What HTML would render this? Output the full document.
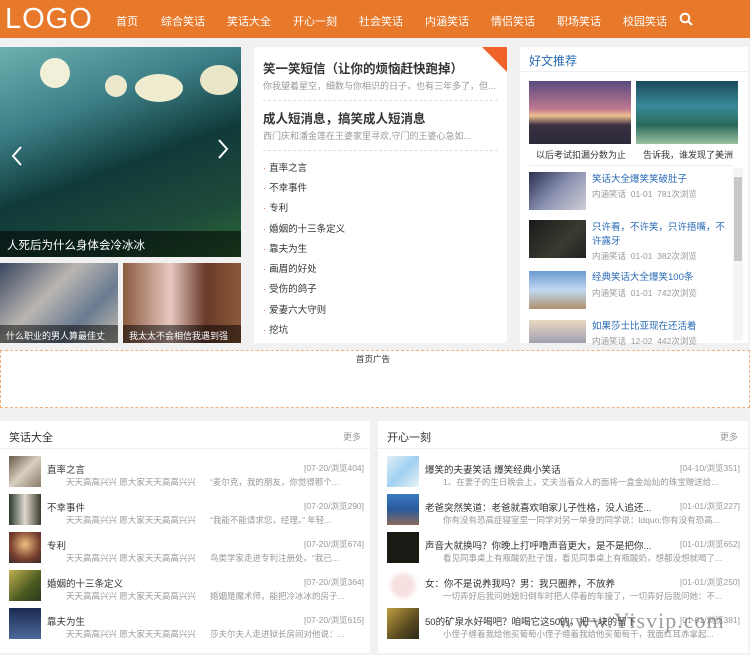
<!DOCTYPE html>
<html><head><meta charset="utf-8"><style>
*{margin:0;padding:0;box-sizing:border-box}
body{width:750px;height:655px;background:#f1f1f1;font-family:"Liberation Sans","Noto Sans CJK SC",sans-serif;position:relative;overflow:hidden;font-size:10px;color:#333}
.a{position:absolute}
.hd{left:0;top:0;width:750px;height:38px;background:#e8792b}
.logo{left:5px;top:3px;color:#fff;font-size:29px;letter-spacing:1px;font-weight:normal}
.nav span{position:absolute;top:13px;color:#fff;font-size:11px}
.w{background:#fff}
.mt{font-size:12.5px;font-weight:bold;color:#333}
.ms{font-size:9px;color:#999}
.li{left:263px;font-size:9.5px;color:#333}
.li:before{content:"·";color:#e8792b;margin-right:3px}
.rt{left:592px;font-size:9.5px;color:#2a6bb5;width:140px;line-height:14px}
.rm{left:592px;font-size:8.5px;color:#999}
.th{left:529px;width:57px;height:38px}
.bt{font-size:9.5px;color:#333}
.bd{font-size:8.5px;color:#999}
.bx{font-size:8.5px;color:#999}
</style></head><body>
<div class="a hd"></div>
<div class="a logo">LOGO</div>
<div class="nav">
<span style="left:116px">首页</span><span style="left:161px">综合笑话</span><span style="left:227px">笑话大全</span><span style="left:293px">开心一刻</span><span style="left:359px">社会笑话</span><span style="left:425px">内涵笑话</span><span style="left:491px">情侣笑话</span><span style="left:557px">职场笑话</span><span style="left:623px">校园笑话</span>
</div>
<svg class="a" style="left:679px;top:12px" width="14" height="14" viewBox="0 0 14 14"><circle cx="6" cy="6" r="4.3" fill="none" stroke="#fff" stroke-width="2"/><path d="M9 9l4 4" stroke="#fff" stroke-width="2.2"/></svg>

<!-- slider -->
<div class="a" style="left:0;top:47px;width:241px;height:210px;background:linear-gradient(160deg,#6fb0b0 0%,#3c7f86 30%,#103a3a 55%,#1d4a3a 80%,#2f6a34 100%)"></div>
<div class="a" style="left:40px;top:58px;width:30px;height:30px;border-radius:50%;background:#f2f0d8"></div>
<div class="a" style="left:105px;top:75px;width:22px;height:22px;border-radius:50%;background:#ece8cc"></div>
<div class="a" style="left:135px;top:74px;width:48px;height:28px;border-radius:50%;background:#efecd0"></div>
<div class="a" style="left:200px;top:65px;width:38px;height:30px;border-radius:50%;background:#eae6c8"></div>
<div class="a" style="left:0;top:231px;width:241px;height:26px;background:rgba(0,0,0,.55)"></div>
<div class="a" style="left:7px;top:237px;color:#fff;font-size:11.5px">人死后为什么身体会冷冰冰</div>
<svg class="a" style="left:10px;top:145px" width="14" height="22"><path d="M11 2L3 11l8 9" fill="none" stroke="#fff" stroke-width="2"/></svg>
<svg class="a" style="left:216px;top:138px" width="14" height="22"><path d="M3 2l8 9-8 9" fill="none" stroke="#fff" stroke-width="2"/></svg>
<div class="a" style="left:0;top:263px;width:118px;height:80px;background:linear-gradient(135deg,#3a4560,#b9b6b0 40%,#6a7a90 70%,#c9c2b0)"></div>
<div class="a" style="left:123px;top:263px;width:118px;height:80px;background:linear-gradient(90deg,#8a5a40,#e8c8c0 40%,#6a3a2a 70%,#8a5a3a)"></div>
<div class="a" style="left:0;top:325px;width:118px;height:18px;background:rgba(0,0,0,.5)"></div>
<div class="a" style="left:123px;top:325px;width:118px;height:18px;background:rgba(0,0,0,.5)"></div>
<div class="a" style="left:6px;top:329px;color:#fff;font-size:9px">什么职业的男人算最佳丈</div>
<div class="a" style="left:129px;top:329px;color:#fff;font-size:9px">我太太不会相信我遇到强</div>

<!-- middle -->
<div class="a w" style="left:254px;top:47px;width:253px;height:296px"></div>
<svg class="a" style="left:482px;top:47px" width="25" height="25"><path d="M0 0H25V25Z" fill="#f0622a"/></svg>
<div class="a mt" style="left:263px;top:58px">笑一笑短信（让你的烦恼赶快跑掉）</div>
<div class="a ms" style="left:263px;top:79px">你我望着星空，细数与你相识的日子，也有三年多了，但...</div>
<div class="a" style="left:263px;top:100px;width:235px;border-top:1px dashed #ddd"></div>
<div class="a mt" style="left:263px;top:108px">成人短消息，搞笑成人短消息</div>
<div class="a ms" style="left:263px;top:129px">西门庆和潘金莲在王婆家里寻欢,守门的王婆心急如...</div>
<div class="a" style="left:263px;top:150px;width:235px;border-top:1px dashed #ddd"></div>
<div class="a li" style="top:160px">直率之言</div>
<div class="a li" style="top:180px">不幸事件</div>
<div class="a li" style="top:200px">专利</div>
<div class="a li" style="top:221px">婚姻的十三条定义</div>
<div class="a li" style="top:241px">靠夫为生</div>
<div class="a li" style="top:261px">画眉的好处</div>
<div class="a li" style="top:281px">受伤的鸽子</div>
<div class="a li" style="top:302px">爱妻六大守则</div>
<div class="a li" style="top:322px">挖坑</div>

<!-- right -->
<div class="a w" style="left:520px;top:47px;width:228px;height:296px"></div>
<div class="a" style="left:529px;top:52px;font-size:12px;color:#2a6bb5">好文推荐</div>
<div class="a" style="left:520px;top:71px;width:228px;border-top:1px solid #eee"></div>
<div class="a" style="left:529px;top:81px;width:102px;height:63px;background:linear-gradient(180deg,#5a4a80,#c07a90 45%,#f0c090 55%,#3a3040 70%,#2a2a3a)"></div>
<div class="a" style="left:636px;top:81px;width:102px;height:63px;background:linear-gradient(180deg,#1a4a5a,#3a8a9a 40%,#2a6a5a 70%,#9ac0a0)"></div>
<div class="a" style="left:536px;top:148px;font-size:9px;color:#333">以后考试扣漏分数为止</div>
<div class="a" style="left:643px;top:148px;font-size:9px;color:#333">告诉我，谁发现了美洲</div>
<div class="a" style="left:529px;top:165px;width:204px;border-top:1px solid #eee"></div>
<div class="a" style="left:733px;top:168px;width:10px;height:172px;background:#f4f4f4"></div>
<div class="a" style="left:734px;top:177px;width:8px;height:84px;background:#c8c8c8"></div>
<div class="a th" style="top:172px;background:linear-gradient(135deg,#2a3050,#8a90b0 50%,#d0d0d8)"></div>
<div class="a rt" style="top:173px">笑话大全爆笑笑破肚子</div>
<div class="a rm" style="top:188px">内涵笑话&nbsp; 01-01 &nbsp;781次浏览</div>
<div class="a th" style="top:220px;background:linear-gradient(135deg,#1a1a1a,#3a3a30 60%,#222)"></div>
<div class="a rt" style="top:221px">只许看，不许笑，只许捂嘴，不许露牙</div>
<div class="a rm" style="top:250px">内涵笑话&nbsp; 01-01 &nbsp;382次浏览</div>
<div class="a th" style="top:271px;background:linear-gradient(180deg,#6a9ad0,#c0d8f0 50%,#b09070)"></div>
<div class="a rt" style="top:271px">经典笑话大全爆笑100条</div>
<div class="a rm" style="top:287px">内涵笑话&nbsp; 01-01 &nbsp;742次浏览</div>
<div class="a th" style="top:320px;height:23px;background:linear-gradient(180deg,#e8d8c0,#a0a0b0)"></div>
<div class="a rt" style="top:320px">如果莎士比亚现在还活着</div>
<div class="a rm" style="top:335px">内涵笑话&nbsp; 12-02 &nbsp;442次浏览</div>

<!-- ad -->
<div class="a w" style="left:0;top:350px;width:750px;height:58px;border:1px dashed #f0b080"></div>
<div class="a" style="left:356px;top:353px;font-size:8.5px;color:#333">首页广告</div>

<!-- bottom left -->
<div class="a w" style="left:0;top:421px;width:370px;height:232px"></div>
<div class="a" style="left:9px;top:429px;font-size:11px;color:#333">笑话大全</div>
<div class="a" style="left:343px;top:430px;font-size:9px;color:#999">更多</div>
<div class="a" style="left:0;top:448px;width:370px;border-top:1px solid #f0f0f0"></div>

<div class="a" style="left:9px;top:456px;width:32px;height:31px;background:linear-gradient(135deg,#6a5a4a,#d8cfc0 50%,#8a7a6a)"></div>
<div class="a" style="left:9px;top:494px;width:32px;height:31px;background:linear-gradient(90deg,#2a3a2a,#e0d8d0 50%,#3a3a2a)"></div>
<div class="a" style="left:9px;top:532px;width:32px;height:31px;background:radial-gradient(circle at 50% 40%,#f0c080,#7a4030 60%,#3a2a2a)"></div>
<div class="a" style="left:9px;top:570px;width:32px;height:31px;background:linear-gradient(135deg,#c0b050,#4a5a20 60%,#2a3a1a)"></div>
<div class="a" style="left:9px;top:608px;width:32px;height:31px;background:linear-gradient(180deg,#1a2a50,#4a6a9a)"></div>

<div class="a bt" style="left:47px;top:462px">直率之言</div><div class="a bx" style="left:304px;top:462px">[07-20/浏览404]</div>
<div class="a bd" style="left:66px;top:476px">天天高高兴兴 愿大家天天高高兴兴&nbsp;&nbsp;&nbsp;&nbsp;&nbsp; “麦尔克，我的朋友，你觉得那个...</div>
<div class="a bt" style="left:47px;top:500px">不幸事件</div><div class="a bx" style="left:304px;top:500px">[07-20/浏览290]</div>
<div class="a bd" style="left:66px;top:514px">天天高高兴兴 愿大家天天高高兴兴&nbsp;&nbsp;&nbsp;&nbsp;&nbsp; “我能不能请求您，经理。” 年轻...</div>
<div class="a bt" style="left:47px;top:538px">专利</div><div class="a bx" style="left:304px;top:538px">[07-20/浏览674]</div>
<div class="a bd" style="left:66px;top:552px">天天高高兴兴 愿大家天天高高兴兴&nbsp;&nbsp;&nbsp;&nbsp;&nbsp; 鸟类学家走进专利注册处。“我已...</div>
<div class="a bt" style="left:47px;top:576px">婚姻的十三条定义</div><div class="a bx" style="left:304px;top:576px">[07-20/浏览364]</div>
<div class="a bd" style="left:66px;top:590px">天天高高兴兴 愿大家天天高高兴兴&nbsp;&nbsp;&nbsp;&nbsp;&nbsp; 婚姻是魔术师，能把冷冰冰的房子...</div>
<div class="a bt" style="left:47px;top:614px">靠夫为生</div><div class="a bx" style="left:304px;top:614px">[07-20/浏览615]</div>
<div class="a bd" style="left:66px;top:628px">天天高高兴兴 愿大家天天高高兴兴&nbsp;&nbsp;&nbsp;&nbsp;&nbsp; 莎夫尔夫人走进狱长房间对他说：...</div>

<!-- bottom right -->
<div class="a w" style="left:378px;top:421px;width:370px;height:232px"></div>
<div class="a" style="left:387px;top:429px;font-size:11px;color:#333">开心一刻</div>
<div class="a" style="left:720px;top:430px;font-size:9px;color:#999">更多</div>
<div class="a" style="left:378px;top:448px;width:370px;border-top:1px solid #f0f0f0"></div>

<div class="a" style="left:387px;top:456px;width:32px;height:31px;background:linear-gradient(135deg,#e0f0f8,#a0d0f0 50%,#e8f4fa)"></div>
<div class="a" style="left:387px;top:494px;width:32px;height:31px;background:linear-gradient(180deg,#3a7ac0,#2a5a9a 50%,#8a6a5a)"></div>
<div class="a" style="left:387px;top:532px;width:32px;height:31px;background:#1a1a14"></div>
<div class="a" style="left:387px;top:570px;width:32px;height:31px;background:radial-gradient(circle at 50% 50%,#f8e0e0 40%,#fff 70%)"></div>
<div class="a" style="left:387px;top:608px;width:32px;height:31px;background:linear-gradient(135deg,#c0a040,#5a4a20 60%,#2a2a1a)"></div>

<div class="a bt" style="left:425px;top:462px">爆笑的夫妻笑话 爆笑经典小笑话</div><div class="a bx" style="left:680px;top:462px">[04-10/浏览351]</div>
<div class="a bd" style="left:443px;top:476px">1、在妻子的生日晚会上，丈夫当着众人的面将一盒金灿灿的珠宝赠送给...</div>
<div class="a bt" style="left:425px;top:500px">老爸突然笑道：老爸就喜欢咱家儿子性格，没人追还...</div><div class="a bx" style="left:680px;top:500px">[01-01/浏览227]</div>
<div class="a bd" style="left:443px;top:514px">你有没有恐高症寝室里一同学对另一单身的同学说：ldquo;你有没有恐高...</div>
<div class="a bt" style="left:425px;top:538px">声音大就换吗？你晚上打呼噜声音更大，是不是把你...</div><div class="a bx" style="left:680px;top:538px">[01-01/浏览652]</div>
<div class="a bd" style="left:443px;top:552px">看见同事桌上有瓶酸奶肚子饿，看见同事桌上有瓶酸奶，想都没想就喝了...</div>
<div class="a bt" style="left:425px;top:576px">女：你不是说养我吗？男：我只圈养，不放养</div><div class="a bx" style="left:680px;top:576px">[01-01/浏览250]</div>
<div class="a bd" style="left:443px;top:590px">一切弄好后我问她媳妇倒车时把人停着的车撞了，一切弄好后我问她：不...</div>
<div class="a bt" style="left:425px;top:614px">50的矿泉水好喝吧？咱喝它这50的，把一块的留下</div><div class="a bx" style="left:680px;top:614px">[01-01/浏览381]</div>
<div class="a bd" style="left:443px;top:628px">小侄子缠着我给他买葡萄小侄子缠着我给他买葡萄干，我面红耳赤拿起...</div>
<div class="a" style="left:558px;top:608px;font-family:'Liberation Serif',serif;font-size:22px;color:rgba(90,90,90,.6);letter-spacing:1px">www.Yisvip.com</div>
</body></html>
